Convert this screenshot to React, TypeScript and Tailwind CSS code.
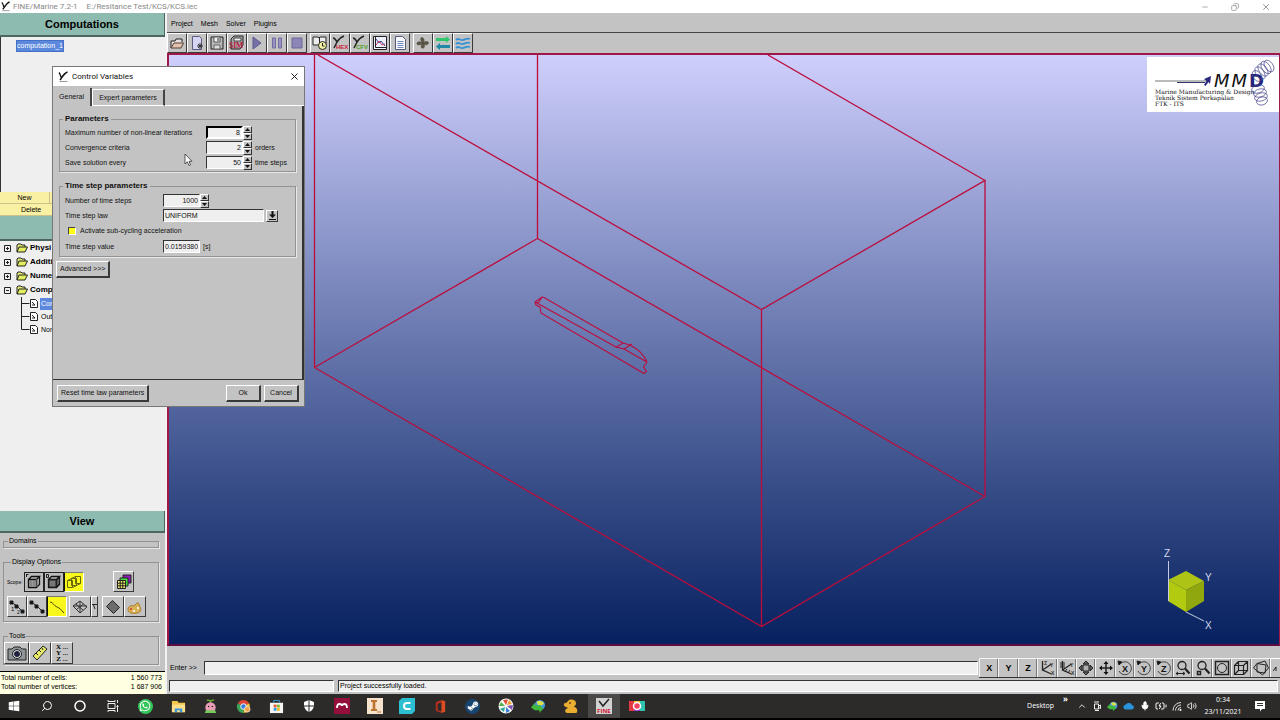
import React from "react";
import { FaWindows, FaWhatsapp, FaSteamSymbol } from "react-icons/fa";
import {
  Search, Circle, Minus, Copy, X, ChevronUp, ShieldHalf, Mic, BatteryCharging, Volume2,
} from "lucide-react";

const raised = "border border-t-white border-l-white border-r-[#3a3a3a] border-b-[#3a3a3a] bg-[#c3c3c3]";
const sunken = "border border-t-[#333] border-l-[#333] border-r-white border-b-white bg-[#efefef]";

type Kids = { children?: React.ReactNode };

function Icon({ size = "size-4", box = "0 0 16 16", children }: Kids & { size?: string; box?: string }) {
  return (
    <svg className={`${size} shrink-0`} viewBox={box} fill="none" stroke="#222" strokeWidth="1" aria-hidden="true">
      {children}
    </svg>
  );
}

function FineMark({ size = "size-3" }: { size?: string }) {
  return (
    <Icon size={size} box="0 0 12 12">
      <path d="M2 1.5c1 1 1.6 3 2.4 5.500M10.500 1C8 2 6 4.500 4.200 7.500L3 9" stroke="#111" strokeWidth="1.400" />
      <path d="M2.500 10.500h8" stroke="#999" />
    </Icon>
  );
}

function ToolButton({ label, width = "w-5", height = "h-5", tone = raised, children }: Kids & { label: string; width?: string; height?: string; tone?: string }) {
  return (
    <button type="button" aria-label={label} className={`${width} ${height} ${tone} flex shrink-0 items-center justify-center overflow-hidden`}>
      {children}
    </button>
  );
}

function PanelTitle({ children }: Kids) {
  return (
    <h2 className="flex shrink-0 items-center justify-center border-b-2 border-b-[#4d6660] border-r border-r-[#4d6660] bg-[#8ebbb0] text-[11px] font-bold leading-3 text-black">
      {children}
    </h2>
  );
}

const cubeFrame = (
  <path d="M2.500 5.500h8v8h-8zM2.500 5.500l3-3h8l-3 3M13.500 2.500v8l-3 3" stroke="#111" strokeWidth="1.300" />
);

/* ---------- main toolbar ---------- */

const toolbar: { label: string; icon: React.ReactNode }[][] = [
  [
    { label: "Open", icon: <Icon><path d="M2 13V6h4l1-2h6v3" fill="#e8e0dc" /><path d="M2 13l3-5h9.500l-2.500 5z" fill="#e3c3ad" stroke="#53403a" /></Icon> },
    { label: "New project", icon: <Icon><path d="M3.500 1.500h7l2 2v11h-9z" fill="#d6d6f4" stroke="#5c5c80" /><path d="M11 8v6M8 11h6M9 9l4 4M13 9l-4 4" stroke="#333" /></Icon> },
    { label: "Save", icon: <Icon><path d="M2 2h12v12H2z" fill="#b9b9b9" /><path d="M5 2h6v5H5z" fill="#f5f5f5" stroke="#555" /><path d="M5 10h6v4H5z" fill="#ddd" stroke="#666" /><path d="M9 3v3" /></Icon> },
    { label: "Save simulation", icon: <Icon><path d="M2 4l3-3h9v9l-3 4H2z" fill="#aaa" /><path d="M5 3h7v3H5z" fill="#eee" stroke="#444" /><text x="0" y="13" fontSize="7.500" fontWeight="700" fontFamily="Liberation Serif" fill="#b3123d" stroke="none">SIM</text></Icon> },
    { label: "Start", icon: <Icon><path d="M4 2v12l8-6z" fill="#7771a8" stroke="#5d588f" /></Icon> },
    { label: "Pause", icon: <Icon><path d="M3.500 3h3v10h-3zM9.500 3h3v10h-3z" fill="#9993c4" stroke="#716ba0" /></Icon> },
    { label: "Stop", icon: <Icon><path d="M3 3h10v10H3z" fill="#8c86b8" stroke="#6a6498" /></Icon> },
  ],
  [
    { label: "Task manager", icon: <Icon><path d="M1 2h5l1 1 1-1h6v8H1z" fill="#ececec" /><path d="M7.500 3v7" /><circle cx="10.500" cy="10.500" r="4" fill="#f2f0a0" /><path d="M10.500 8v3h2" /></Icon> },
    { label: "HEXPRESS", icon: <Icon><path d="M1 3c2 0 3 2 4 4 2-3 4-5 7-6M5 7l-3 6" strokeWidth="1.500" /><text x="4" y="13.500" fontSize="6" fontWeight="700" fontFamily="Liberation Sans" fill="#cc2038" stroke="none">HEX</text></Icon> },
    { label: "CFView", icon: <Icon><path d="M1 3c2 0 3 2 4 4 2-3 4-5 7-6M5 7l-3 6" strokeWidth="1.500" /><text x="4" y="13.500" fontSize="6" fontWeight="700" fontFamily="Liberation Sans" fill="#4ea01f" stroke="none">CFV</text></Icon> },
    { label: "Monitor", icon: <Icon><path d="M1.500 1.500h13v13h-13z" fill="#eeeefc" /><path d="M3.500 2v10.500H14" /><path d="M4 4l3 4 2-2 4 5" stroke="#3048a0" /><path d="M4 10l3-4 3 4 3-1" stroke="#c04060" /></Icon> },
    { label: "Report", icon: <Icon><path d="M3.500 1.500h7l3 3v10h-10z" fill="#f8f8ff" stroke="#555a78" /><path d="M5.500 6.500h6M5.500 8.500h6M5.500 10.500h6M5.500 12.500h6" stroke="#6e88b8" /></Icon> },
  ],
  [
    { label: "Propeller", icon: <Icon><path d="M8 8C4 5 6 1 8 3s1 3 0 5c3-3 7-1 5 1s-4 0-5-1c3 3 1 6-1 5s0-4 1-5c-3 3-7 2-6 0s4-1 6 0z" fill="#5d5848" stroke="#423f35" strokeWidth=".5" /></Icon> },
    { label: "Exchange", icon: <Icon><path d="M1 3h10V1l4 3.500L11 8V6H1z" fill="#2fc76b" stroke="none" /><path d="M15 10H5V8l-4 3.500L5 15v-2h10z" fill="#2189a8" stroke="none" /></Icon> },
    { label: "Waves", icon: <Icon><path d="M1 5c3-3 4 1 7 0s4-2 7-1M1 9c3-3 4 1 7 0s4-2 7-1M1 13c3-3 4 1 7 0s4-2 7-1" stroke="#3591d6" strokeWidth="1.800" /></Icon> },
  ],
];

function Toolbar() {
  return (
    <div className="flex h-[21px] items-center gap-[3px] border-t border-t-[#444] bg-[#c3c3c3]">
      {toolbar.map((group, i) => (
        <div key={i} className="flex">
          {group.map((t) => <ToolButton key={t.label} label={t.label}>{t.icon}</ToolButton>)}
        </div>
      ))}
    </div>
  );
}

/* ---------- left column ---------- */

const branches = ["Physi", "Additi", "Nume", "Comp"];
const leaves = ["Con", "Out", "Non"];

function Folder() {
  return (
    <Icon size="h-[10px] w-3" box="0 0 12 10">
      <path d="M1 9V2l1-1h3l1 1h3v2" fill="#e6ec7a" />
      <path d="M1 9l2-5h8.500L9 9z" fill="#e3ee5f" />
    </Icon>
  );
}

function Tree() {
  return (
    <ul className="flex-1 bg-[#efefef] pl-1 text-[8px] leading-3 text-black">
      {branches.map((name, i) => (
        <li key={name} className="whitespace-nowrap">
          <div className="flex h-[14px] items-center font-bold">
            <Icon size="size-[7px]" box="0 0 7 7"><path d={i === 3 ? "M.5.5h6v6h-6zM2 3.500h3" : "M.5.5h6v6h-6zM2 3.500h3M3.500 2v3"} /></Icon>
            <span className="ml-[5px] mr-[2px]"><Folder /></span>
            {name}
          </div>
          {i === 3 && (
            <ul className="ml-[17px] font-normal">
              {leaves.map((leaf, k) => (
                <li key={leaf} className="flex h-[13px] items-center text-[7px]">
                  <Icon size="h-[13px] w-[9px]" box="0 0 9 13"><path d={k === 2 ? "M.5 0v6.500h8" : "M.5 0v13M.5 6.500h8"} /></Icon>
                  <Icon size="h-[9px] w-2" box="0 0 8 9"><path d="M.5.5h5l2 2v6h-7z" fill="#fff" /><path d="M2 3l3 3M2 6h3" /></Icon>
                  <span className={k === 0 ? "ml-[2px] bg-[#5b87dd] px-px text-white" : "ml-[2px] px-px"}>{leaf}</span>
                </li>
              ))}
            </ul>
          )}
        </li>
      ))}
    </ul>
  );
}

const groupBox = "min-w-0 border border-[#929292] shadow-[1px_1px_0_#e8e8e8]";
const yellowTone = "border border-t-[#777] border-l-[#111] border-r-white border-b-white bg-[#f8f81c]";
const darkTone = "border border-[#222] bg-[#bdbdbd]";

function ViewPanel() {
  return (
    <div className="flex flex-col gap-[10px] bg-[#c3c3c3] pb-[6px] pl-[3px] pr-[6px] pt-1 text-[7px] leading-2 text-black">
      <fieldset className={`${groupBox} h-[11px]`}><legend className="ml-1 px-[1px]">Domains</legend></fieldset>
      <fieldset className={`${groupBox} pb-1 pl-[3px]`}>
        <legend className="ml-1 px-[1px]">Display Options</legend>
        <div className="flex items-center pt-[5px]">
          <span className="w-[17px] text-[5px]">Scope:</span>
          <ToolButton label="Solid scope" tone={darkTone}><Icon>{cubeFrame}<path d="M3 7h7M3 9h7M3 11h7M5 6v7M8 6v7M11 5v8" stroke="#777" /><path d="M0 .5h2.500M.5 0v3" /></Icon></ToolButton>
          <ToolButton label="Block scope" tone={darkTone}><Icon>{cubeFrame}<path d="M3 6h7v7H3z" fill="#777" /><path d="M11 6l2-2v6l-2 2z" fill="#999" /><path d="M.5.5h2v3h-2z" /></Icon></ToolButton>
          <ToolButton label="Face scope" tone={yellowTone}><Icon><path d="M1.500 6.500h5v7h-5zM5.500 4.500h5v7h-5zM9.500 2.500h5v7h-5zM1.500 6.500l8-4M6.500 13.500l8-4" stroke="#68680a" /></Icon></ToolButton>
          <div className="ml-[29px]">
            <ToolButton label="Layers" width="w-[21px]" height="h-[21px]"><Icon><path d="M7 1h8v8H7z" fill="#8d1db8" /><path d="M4 4h8v8H4z" fill="#46df3d" /><path d="M1.500 6.500h8v8h-8z" fill="#f0ef66" /><path d="M4.200 6.500v8M6.800 6.500v8M1.500 9.200h8M1.500 11.800h8" /></Icon></ToolButton>
          </div>
        </div>
        <div className="flex pt-1">
          <ToolButton label="Numbered points" height="h-[21px]"><Icon><path d="M2 3l6 4 6 6" /><path d="M1 2h3v3H1zM6 6h3v3H6zM12 11h3v3h-3z" fill="#111" /><text x="2" y="12" fontSize="6" fill="#111" stroke="none">1</text><text x="8" y="15" fontSize="5" fill="#111" stroke="none">2</text></Icon></ToolButton>
          <ToolButton label="Points" height="h-[21px]"><Icon><path d="M2 3l6 4 6 6" /><path d="M1 2h3v3H1zM6 6h3v3H6zM12 11h3v3h-3z" fill="#111" /></Icon></ToolButton>
          <ToolButton label="Curves" height="h-[21px]" tone={yellowTone}><Icon><path d="M1 3c3 0 4 4 7 5s4 3 7 6" stroke="#4b4b00" /></Icon></ToolButton>
          <div className="ml-[2px] flex">
            <ToolButton label="Wire grid" width="w-[22px]" height="h-[21px]"><Icon><path d="M1 7l7-5 7 6-7 6zM4 5l7 6M8 2v12M4.500 10.500l7-5.500M1 7h14" stroke="#333" /></Icon></ToolButton>
            <ToolButton label="Grid menu" width="w-[7px]" height="h-[21px]"><Icon size="size-[5px]" box="0 0 5 5"><path d="M0 .5h5M1.500 1l1.500 4" /></Icon></ToolButton>
          </div>
          <div className="ml-1 flex">
            <ToolButton label="Shading" width="w-[22px]" height="h-[21px]"><Icon><path d="M1.500 7.500l6-6 7 7-6 6z" fill="#6c6c6c" /></Icon></ToolButton>
            <ToolButton label="Colours" width="w-[22px]" height="h-[21px]"><Icon><path d="M1 10c0-3 4-4 6-3l3-3c3 0 2 2 3 4s2 5-3 6-9 0-9-4z" fill="#d9b157" stroke="#a87c2a" /><circle cx="4" cy="10" r="1" fill="#d33" stroke="none" /><circle cx="7" cy="12" r="1" fill="#fff" stroke="none" /><circle cx="11" cy="9" r="1" fill="#fff" stroke="none" /></Icon></ToolButton>
          </div>
        </div>
      </fieldset>
      <fieldset className={groupBox}>
        <legend className="ml-1 px-[1px]">Tools</legend>
        <div className="flex pt-[2px]">
          <ToolButton label="Snapshot" width="w-[25px]" height="h-[22px]"><Icon size="h-4 w-5" box="0 0 20 16"><path d="M1 4h4l2-2h6l2 2h4v11H1z" fill="#909698" /><circle cx="10" cy="9" r="4.500" fill="#cfd0df" /><circle cx="10" cy="9" r="2.500" fill="#20204c" /></Icon></ToolButton>
          <ToolButton label="Ruler" width="w-[22px]" height="h-[22px]"><Icon><path d="M1 11L11 1l4 3L5 15z" fill="#e6e96a" /><path d="M4 8l2 2M7 5l2 2M10 3l1 2" /></Icon></ToolButton>
          <ToolButton label="Coordinates" width="w-[22px]" height="h-[22px]">
            <span className="flex flex-col font-['Liberation_Serif',serif] text-[7px] font-bold leading-[6px]"><span>X ...</span><span>Y ...</span><span>Z ...</span></span>
          </ToolButton>
        </div>
      </fieldset>
    </div>
  );
}

function Sidebar() {
  const yellow = "border-b border-r border-[#c9c28a] bg-[#faf0a4] text-[7px] leading-[10px] text-black";
  return (
    <aside className="flex w-[165px] shrink-0 flex-col">
      <div className="grid h-6"><PanelTitle>Computations</PanelTitle></div>
      <div className="flex h-[155px] items-start border-l border-l-[#333] bg-[#efefef] pl-[15px] pt-[3px]">
        <span className="border border-[#4470c8] bg-[#5b87dd] text-[7px] leading-[10px] text-white">computation_1</span>
      </div>
      <div className="flex h-3"><button type="button" className={`w-[50px] ${yellow}`}>New</button><button type="button" aria-label="Rename" className={`flex-1 ${yellow}`} /></div>
      <div className="flex h-3"><button type="button" className={`w-[63px] ${yellow}`}>Delete</button><button type="button" aria-label="Copy" className={`flex-1 ${yellow}`} /></div>
      <div className="grid h-[25px]"><PanelTitle /></div>
      <Tree />
      <div className="grid h-[22px]"><PanelTitle>View</PanelTitle></div>
      <ViewPanel />
      <dl className="h-[23px] border-t border-t-black bg-[#ffffe1] px-[1px] pt-px text-[7px] leading-[9px] text-black">
        <div className="flex justify-between pr-[2px]"><dt>Total number of cells:</dt><dd>1 560 773</dd></div>
        <div className="flex justify-between pr-[2px]"><dt>Total number of vertices:</dt><dd>1 687 906</dd></div>
      </dl>
    </aside>
  );
}

/* ---------- 3D view ---------- */

function Scene() {
  return (
    <div className="relative flex-1 border-2 border-r border-[#a01848] border-b-[#5d0d40] bg-linear-to-b from-[#cfcffc] to-[#07205f]">
      <svg className="absolute inset-0 size-full" viewBox="169 55 1110 590" preserveAspectRatio="xMinYMin slice" fill="none" stroke="#bd0c3c" strokeWidth="1.300" role="img" aria-label="Hull inside its flow domain">
        <path d="M314.500 55V367.500L761.500 626.500 985 496.500V180.500L761.500 309.500 318 55M761.500 309.500V626.500M537.500 55V238.500L314.500 367.500M537.500 238.500L985 496.500M768 55L985 180.500" />
        <path strokeWidth="1.100" d="M616 347L537 303M623 343L544 297.500l-2-.5-7 5 1 3 4 2 1 6L644 373.500l2.500-2-3-4.500 3.500-5c-3-7-9-13-17-17l-7-2-7 4 8 2 22 12.500M624 349l8-5M542 297l-3 5-4 1" />
        <g stroke="none">
          <path d="M1168 580l18-9 18 10-18 9z" fill="#adc416" />
          <path d="M1168 580l18 10v22l-18-11z" fill="#b2cb10" />
          <path d="M1186 590l18-9v20l-18 11z" fill="#91a70e" />
        </g>
        <path d="M1168.500 561v40M1186 612l18 9" stroke="#c5cbe0" strokeWidth="1" />
        <g stroke="none" fill="#d3d8ea" fontFamily="Liberation Sans, sans-serif" fontSize="10">
          <text x="1164" y="557">Z</text><text x="1205" y="581">Y</text><text x="1205" y="629">X</text>
        </g>
      </svg>
      <div className="absolute right-0 top-[2px] h-[55px] w-[132px] bg-white pl-2 pt-4 text-[#111]">
        <div className="flex h-4 items-center">
          <Icon size="h-3 w-[57px]" box="0 0 57 12">
            <path d="M0 6h52" stroke="#777" /><path d="M22 7.500h28" stroke="#333a70" />
            <path d="M49 4l7-3-1 8-1.500-2-3 4-1.500-1 2.500-4z" fill="#2b2880" stroke="none" />
          </Icon>
          <span className="ml-[2px] flex gap-[2px] font-['DejaVu_Sans',sans-serif] text-[18px] leading-4">
            <i>M</i><i>M</i><b className="text-[#24227c]">D</b>
          </span>
        </div>
        <p className="font-['DejaVu_Serif',serif] text-[6px] leading-[6px] whitespace-nowrap">
          Marine Manufacturing &amp; Design<br />Teknik Sistem Perkapalan<br />FTK - ITS
        </p>
        <svg className="absolute right-1 top-[2px] h-12 w-6" viewBox="0 0 24 48" fill="none" stroke="#4a4a90" strokeWidth=".7" aria-hidden="true">
          <ellipse cx="18" cy="7" rx="4" ry="6.500" transform="rotate(-35 18 7)" /><ellipse cx="15" cy="8.500" rx="4" ry="7" transform="rotate(-35 15 8.500)" />
          <ellipse cx="12" cy="11" rx="4" ry="7" transform="rotate(-35 12 11)" /><ellipse cx="9" cy="14" rx="4" ry="7" transform="rotate(-35 9 14)" />
          <ellipse cx="6" cy="17" rx="4" ry="6" transform="rotate(-35 6 17)" />
          <ellipse cx="7" cy="30" rx="6.500" ry="4" transform="rotate(-15 7 30)" /><ellipse cx="9" cy="34" rx="6.500" ry="4" transform="rotate(-15 9 34)" />
          <ellipse cx="10" cy="38" rx="6.500" ry="4" transform="rotate(-15 10 38)" /><ellipse cx="11" cy="42" rx="5.500" ry="4" transform="rotate(-15 11 42)" />
        </svg>
      </div>
    </div>
  );
}

/* ---------- command bar ---------- */

function RotateIcon({ axis }: { axis: string }) {
  return (
    <Icon>
      <path d="M3 4a6.500 6.500 0 1 1-1 7" stroke="#444" /><path d="M1 1l4 1-3 3z" fill="#111" />
      <text x="5" y="11.500" fontSize="9" fontWeight="700" fontFamily="Liberation Sans" fill="#111" stroke="none">{axis}</text>
    </Icon>
  );
}

const axisArms = <path d="M3.500 1v9l9 4M3.500 10l9-6" strokeWidth="1.300" />;
const lens = <><circle cx="7" cy="5.500" r="4" strokeWidth="1.300" /><path d="M10 8.500l4.500 5" strokeWidth="2.200" /></>;

const viewTools: { label: string; icon: React.ReactNode }[] = [
  { label: "View along X", icon: "X" },
  { label: "View along Y", icon: "Y" },
  { label: "View along Z", icon: "Z" },
  { label: "Isometric view", icon: <Icon>{axisArms}<text x="5" y="5" fontSize="5" fill="#333" stroke="none">Z</text><text x="11" y="7" fontSize="5" fill="#333" stroke="none">Y</text><text x="12" y="15" fontSize="5" fill="#333" stroke="none">X</text></Icon> },
  { label: "Oblique view", icon: <Icon>{axisArms}<path d="M1 3h5M1 5h5M1 7h5M6 12l2-3M9 13l2-3" /><text x="11" y="7" fontSize="5" fill="#333" stroke="none">Y</text><text x="12" y="15" fontSize="5" fill="#333" stroke="none">X</text></Icon> },
  { label: "Fit", icon: <Icon><path d="M5 5h6v6H5z" fill="#b0b0b0" /><path d="M8 1l3 3H5zM8 15l3-3H5zM1 8l3-3v6zM15 8l-3-3v6z" fill="#666" /></Icon> },
  { label: "Pan", icon: <Icon><path d="M8 2v12M2 8h12" strokeWidth="1.500" /><path d="M8 1l2.500 3h-5zM8 15l2.500-3h-5zM1 8l3-2.500v5zM15 8l-3-2.500v5z" fill="#111" stroke="none" /></Icon> },
  { label: "Rotate about X", icon: <RotateIcon axis="X" /> },
  { label: "Rotate about Y", icon: <RotateIcon axis="Y" /> },
  { label: "Rotate about Z", icon: <RotateIcon axis="Z" /> },
  { label: "Zoom", icon: <Icon>{lens}<path d="M1 13.500h9M3 12l-2 1.500L3 15M8 12l2 1.500L8 15" /></Icon> },
  { label: "Zoom region", icon: <Icon>{lens}<path d="M2.500 11.500h3v3h-3z" strokeWidth="1.500" /></Icon> },
  { label: "Original view", icon: <Icon><path d="M1.500 1.500h13v13h-13z" strokeWidth="1.500" /><circle cx="8" cy="8" r="4.500" /></Icon> },
  { label: "Perspective", icon: <Icon><path d="M1.500 5.500h9v9h-9zM5.500 1.500h9v9h-9zM1.500 5.500l4-4M10.500 5.500l4-4M10.500 14.500l4-4M1.500 14.500l4-4" strokeWidth="1.200" /></Icon> },
  { label: "Cut plane", icon: <Icon><path d="M4 3.500L12 1l3.500 7-6 7L.5 8zM4 3.500l9 1.500-1 8-8-1z" /></Icon> },
];

function CommandBar() {
  return (
    <div className="bg-[#c3c3c3] pt-3 text-[7px] leading-2 text-black">
      <div className="flex h-5 items-center">
        <label htmlFor="command" className="w-[37px] shrink-0 pl-[3px]">Enter &gt;&gt;</label>
        <input id="command" className={`${sunken} h-[14px] min-w-0 flex-1`} />
        <div className="ml-px flex w-[301px] border-b border-b-[#333]">
          <div className="grid w-[291px] grid-cols-15">
            {viewTools.map((t) => (
              <button key={t.label} type="button" aria-label={t.label} className="flex h-[19px] items-center justify-center border-l border-t border-[#f4f4f4] bg-[#c3c3c3] text-[9px] font-bold shadow-[inset_-1px_0_0_#777]">
                {t.icon}
              </button>
            ))}
          </div>
          <button type="button" aria-label="More views" className="flex flex-1 items-center justify-center border-l border-t border-white">
            <Icon size="size-[5px]" box="0 0 5 5"><path d="M0 5l3-4v4" /></Icon>
          </button>
        </div>
      </div>
      <div className="flex gap-1 px-[2px] py-[2px]">
        <div className={`${sunken} h-3 w-[165px]`} />
        <div className={`${sunken} h-3 flex-1 pl-[1px] pt-[1px]`}>Project successfully loaded.</div>
      </div>
    </div>
  );
}

/* ---------- dialog ---------- */

function Stepper({ name }: { name: string }) {
  const cell = "flex h-[7px] w-[9px] items-center justify-center border border-t-white border-l-white border-r-[#333] border-b-[#333] bg-[#c3c3c3]";
  return (
    <span className="flex flex-col">
      <button type="button" aria-label={`Increase ${name}`} className={cell}><Icon size="h-[3px] w-[5px]" box="0 0 5 3"><path d="M0 3L2.500 0 5 3z" fill="#111" stroke="none" /></Icon></button>
      <button type="button" aria-label={`Decrease ${name}`} className={cell}><Icon size="h-[3px] w-[5px]" box="0 0 5 3"><path d="M0 0L2.500 3 5 0z" fill="#111" stroke="none" /></Icon></button>
    </span>
  );
}

function Field({ id, label, value, unit, wide, step = true, strong }: { id: string; label: string; value: string; unit?: string; wide?: boolean; step?: boolean; strong?: boolean }) {
  return (
    <div className="flex h-[15px] items-center">
      <label htmlFor={id} className={wide ? "w-[141px] whitespace-nowrap" : "w-[98px]"}>{label}</label>
      <input id={id} defaultValue={value} className={`${sunken} h-[13px] w-[37px] px-[1px] ${step ? "text-right" : ""} ${strong ? "border-2 border-t-black border-l-black" : ""}`} />
      {step && <Stepper name={label} />}
      {unit && <span className="ml-[3px] whitespace-nowrap">{unit}</span>}
    </div>
  );
}

function ControlDialog() {
  const box = "mx-[6px] min-w-0 border border-[#929292] pl-[5px] shadow-[1px_1px_0_#e8e8e8]";
  const action = `${raised} h-[17px] border-r-2 border-b-2`;
  return (
    <section role="dialog" aria-labelledby="dialog-title" className="absolute left-[52px] top-[66px] flex w-[253px] flex-col border border-[#777] bg-[#c3c3c3] text-[7px] leading-2 text-[#111]">
      <header className="flex h-[19px] items-center bg-white px-1">
        <FineMark />
        <h1 id="dialog-title" className="ml-[3px] flex-1 font-['Roboto',sans-serif] text-[8px] leading-3">Control Variables</h1>
        <button type="button" aria-label="Close"><X className="size-[11px]" strokeWidth={2} /></button>
      </header>
      <div role="tablist" className="flex h-5 items-end">
        <button type="button" role="tab" aria-selected="true" className="h-[18px] w-[39px] border-r-2 border-r-[#444] pb-px">General</button>
        <button type="button" role="tab" aria-selected="false" className="h-[17px] w-[73px] border-b border-b-white border-l border-l-white border-r-2 border-r-[#444] border-t border-t-white">Expert parameters</button>
        <span className="flex-1 border-b border-b-white" />
      </div>
      <div className="flex h-[274px] flex-col border-b border-r-2 border-[#333] pt-[7px]">
        <fieldset className={`${box} pb-px`}>
          <legend className="ml-[-2px] px-[2px] text-[8px] font-bold leading-3">Parameters</legend>
          <Field id="iterations" label="Maximum number of non-linear iterations" value="8" wide strong />
          <Field id="criteria" label="Convergence criteria" value="2" unit="orders" wide />
          <Field id="save" label="Save solution every" value="50" unit="time steps" wide />
        </fieldset>
        <fieldset className={`${box} mt-2 pb-[2px] pt-px`}>
          <legend className="ml-[-2px] px-[2px] text-[8px] font-bold leading-3">Time step parameters</legend>
          <Field id="steps" label="Number of time steps" value="1000" />
          <div className="flex h-[15px] items-center">
            <label htmlFor="law" className="w-[98px]">Time step law</label>
            <select id="law" className={`${sunken} h-[13px] w-[101px] appearance-none pl-[1px]`}><option>UNIFORM</option></select>
            <button type="button" aria-label="Choose time step law" className={`${raised} ml-[2px] flex size-3 items-center justify-center`}>
              <Icon size="size-[9px]" box="0 0 9 9"><path d="M3.500 0h2v3.500H8l-3.500 3.500L1 3.500h2.500zM1 8h7v1H1z" fill="#111" stroke="none" /></Icon>
            </button>
          </div>
          <div className="flex h-4 items-center">
            <input id="cycling" type="checkbox" className="ml-[3px] size-2 appearance-none border border-b-white border-l-[#444] border-r-white border-t-[#444] bg-[#ffff10]" />
            <label htmlFor="cycling" className="ml-1">Activate sub-cycling acceleration</label>
          </div>
          <Field id="value" label="Time step value" value="0.0159380" unit="[s]" step={false} />
        </fieldset>
        <div className="pl-[3px] pt-1"><button type="button" className={`${action} px-[3px]`}>Advanced &gt;&gt;&gt;</button></div>
      </div>
      <footer className="flex h-[26px] items-center gap-[3px] pl-1 pr-[5px]">
        <button type="button" className={`${action} mr-auto px-[3px]`}>Reset time law parameters</button>
        <button type="button" className={`${action} w-[35px]`}>Ok</button>
        <button type="button" className={`${action} w-[35px]`}>Cancel</button>
      </footer>
    </section>
  );
}

/* ---------- taskbar ---------- */

function Globe({ size = "size-[15px]" }: { size?: string }) {
  return (
    <Icon size={size}>
      <circle cx="9.500" cy="6.500" r="5.500" fill="#4a98dc" stroke="none" />
      <path d="M6 3c3-2 6-1 8 2l-3 2-4-1z" fill="#d9e04a" stroke="none" />
      <path d="M0 9l4-5v3h6l3 3-4 5v-3H4z" fill="#3fb939" stroke="none" />
    </Icon>
  );
}

const apps: { label: string; icon: React.ReactNode }[] = [
  { label: "Start menu", icon: <FaWindows className="size-3 text-white" /> },
  { label: "Search", icon: <Search className="size-3 -scale-x-100 text-white" /> },
  { label: "Cortana", icon: <Circle className="size-3 text-white" strokeWidth={3} /> },
  { label: "Task view", icon: <Icon size="size-3" box="0 0 12 12"><path d="M1 3.500h7v5H1zM1 0v1.500h7V0M1 12v-1.500h7V12M10.500 0v3M10.500 5v7M9.500 6.500h2" stroke="#eee" /></Icon> },
  { label: "WhatsApp", icon: <span className="flex size-[15px] items-center justify-center rounded-full bg-[#35c65a]"><FaWhatsapp className="size-3 text-white" /></span> },
  { label: "File Explorer", icon: <Icon size="size-[15px]"><path d="M1 2h6l1 2h7v10H1z" fill="#f3c84b" stroke="none" /><path d="M1 6h14v8H1z" fill="#ffe08a" stroke="none" /><path d="M4 14v-4h8v4h-2.500v-2h-3v2z" fill="#3a94dc" stroke="none" /></Icon> },
  { label: "Pet", icon: <Icon size="size-[15px]"><path d="M8 4V1M4 1.500c2-1 3 0 4 1 1-1 2-2 4-1" stroke="#69b432" strokeWidth="1.500" /><circle cx="8" cy="9" r="5.500" fill="#ec9db6" stroke="none" /><circle cx="6" cy="8" r=".8" fill="#222" stroke="none" /><circle cx="10" cy="8" r=".8" fill="#222" stroke="none" /><path d="M3 12h10l1 3H2z" fill="#79c85b" stroke="none" /></Icon> },
  { label: "Chrome", icon: <Icon size="size-[15px]"><path d="M8 8L1.900 4.500A7 7 0 0 1 14.100 4.500z" fill="#e04434" stroke="none" /><path d="M8 8h6.900A7 7 0 0 1 8 15z" fill="#f3c52e" stroke="none" /><path d="M8 8L14.100 4.500 15 8z" fill="#f3c52e" stroke="none" /><path d="M8 8v7A7 7 0 0 1 1.900 4.500z" fill="#3ba457" stroke="none" /><circle cx="8" cy="8" r="3" fill="#3a7de0" stroke="#fff" /><circle cx="12" cy="11" r="3" fill="#f0a24a" stroke="#fff" strokeWidth=".7" /></Icon> },
  { label: "Store", icon: <Icon size="size-[15px]"><path d="M1 4h14v11H1z" fill="#f4f4f4" stroke="none" /><path d="M5 4V1.500h6V4" stroke="#36a4dc" /><path d="M5 6h3v3H5z" fill="#e8512c" stroke="none" /><path d="M8.500 6h3v3h-3z" fill="#7fb82d" stroke="none" /><path d="M5 9.500h3v3H5z" fill="#2b9be0" stroke="none" /><path d="M8.500 9.500h3v3h-3z" fill="#f8b820" stroke="none" /></Icon> },
  { label: "Security", icon: <Icon size="size-3" box="0 0 12 12"><path d="M6 0l5 2v3c0 3-2 6-5 7-3-1-5-4-5-7V2z" fill="#fff" stroke="none" /><path d="M6 0v12M1 6h10" stroke="#2c2b2a" /></Icon> },
  { label: "Mendeley", icon: <Icon size="size-4"><path d="M0 0h16v16H0z" fill="#950f3c" stroke="none" /><path d="M3 10c0-2 1-4 2.500-4S8 7 8 8c0-1 1-2 2.500-2S13 8 13 10" stroke="#fff" strokeWidth="1.800" /></Icon> },
  { label: "Inventor", icon: <Icon size="size-4"><path d="M0 0h16v16H0z" fill="#f7e2cd" stroke="none" /><path d="M4 2h6v2H8.300v7H10v2H4v-2h1.700V4H4z" fill="#bd7430" stroke="none" /><path d="M10 14h4" stroke="#bd7430" /></Icon> },
  { label: "Cura", icon: <Icon size="size-4"><path d="M3 0h13v13l-3 3H0V3z" fill="#2cbfd2" stroke="none" /><path d="M11.500 5H8a3 3 0 0 0 0 6h3.500" stroke="#fff" strokeWidth="2" /></Icon> },
  { label: "Office", icon: <Icon size="size-[15px]"><path d="M9 1L3 3.500v9L9 15v-2l-4-1V5l4-1z" fill="#b82f1c" stroke="none" /><path d="M9 1l4 1.500v11L9 15z" fill="#dd4c22" stroke="none" /></Icon> },
  { label: "Steam", icon: <span className="flex size-[15px] items-center justify-center rounded-full bg-[#17456f]"><FaSteamSymbol className="size-3 text-white" /></span> },
  { label: "Photos", icon: <Icon size="size-4"><circle cx="8" cy="8" r="7.500" fill="#f6f6f6" stroke="none" /><g stroke="none"><path d="M8 7L5 2l5-.5z" fill="#e24a33" /><path d="M9 7l2-5 3 4z" fill="#f39a27" /><path d="M9 8l6-1-1 5z" fill="#7a52b3" /><path d="M8 9l4 4-4 2z" fill="#367fd3" /><path d="M7 9l-1 5-4-3z" fill="#2ea997" /><path d="M7 8L1 8l2-4z" fill="#53ae45" /></g></Icon> },
  { label: "Download Manager", icon: <Globe /> },
  { label: "Duck", icon: <Icon size="size-4"><path d="M5 3c3-3 8-1 8 2s-2 3-2 4c4 0 4 6 2 6H4c-3-1-2-4 1-5C3 9 0 8 1 6s2 0 4-3z" fill="#e9ad31" stroke="none" /><circle cx="7" cy="5" r="1" fill="#6a4412" stroke="none" /></Icon> },
  { label: "FINE", icon: <span className="flex h-4 w-4 flex-col items-center bg-[#d2d2d2]"><Icon size="h-[10px] w-3" box="0 0 12 10"><path d="M1 3l4 5 6-7" strokeWidth="1.500" /></Icon><span className="text-[6px] font-bold leading-[6px] text-[#d21434]">FINE</span></span> },
  { label: "Recorder", icon: <Icon size="size-4"><path d="M0 3h5v10H0z" fill="#e33a42" stroke="none" /><path d="M5 3h6v5H5z" fill="#efc52b" stroke="none" /><path d="M5 8h6v5H5z" fill="#8a3ad3" stroke="none" /><path d="M11 3h5v10h-5z" fill="#2fc3b0" stroke="none" /><circle cx="8" cy="8" r="3.500" fill="#f3455f" stroke="#fff" strokeWidth="1.500" /></Icon> },
];

function Taskbar() {
  const tray = "size-[10px] text-white";
  return (
    <footer className="flex h-[26px] shrink-0 items-center justify-between border-b-2 border-b-black bg-[#2c2b2a] font-['Open_Sans',sans-serif] text-[8px] leading-3 text-white">
      <nav aria-label="Applications" className="-ml-[2px] grid h-full w-[655px] grid-cols-20">
        {apps.map((a) => (
          <button key={a.label} type="button" aria-label={a.label} className={`flex items-center justify-center ${a.label === "FINE" ? "bg-[#4a4948]" : ""}`}>{a.icon}</button>
        ))}
      </nav>
      <div className="flex h-full items-center gap-[5px] pr-[14px]">
        <span className="mr-1 text-[7px]">Desktop</span>
        <span className="self-start font-bold leading-[10px]">»</span>
        <ChevronUp className={`${tray} ml-1`} />
        <Icon size="size-[10px]" box="0 0 10 10"><path d="M2.500 3h4v5h-4zM6.500 5l2-1v3.500l-2-1M2 1h5M3 9.500h4" stroke="#eee" /></Icon>
        <Globe size="size-[11px]" />
        <Icon size="h-[10px] w-3" box="0 0 12 10"><path d="M3 8.500a2.500 2.500 0 0 1 0-5A3.500 3.500 0 0 1 9 4a2.300 2.300 0 0 1 0 4.500z" fill="#2a93de" stroke="none" /></Icon>
        <Mic className={`${tray} fill-white`} />
        <BatteryCharging className="size-3 text-white" />
        <Icon size="size-[10px]" box="0 0 10 10"><path d="M1 9.500a8 8 0 0 1 8-8M3.500 9.500A5.500 5.500 0 0 1 9 4M6 9.500a3 3 0 0 1 3-3" stroke="#ddd" /><circle cx="8.500" cy="9" r="1" fill="#fff" stroke="none" /></Icon>
        <Volume2 className={tray} />
        <div className="ml-px flex w-10 flex-col items-center text-[7px]"><span>0:34</span><span>23/11/2021</span></div>
        <Icon size="ml-[6px] size-3" box="0 0 12 12"><path d="M1 1h10v8H8l-2 2.500V9H1z" fill="#fff" stroke="none" /><path d="M3 3.500h6M3 5.500h6" stroke="#333" /></Icon>
      </div>
    </footer>
  );
}

export default function App() {
  return (
    <div className="relative flex min-h-screen flex-col bg-[#f2f2f2] font-['Liberation_Sans',sans-serif]">
      <header className="flex h-[13px] shrink-0 items-center bg-white pr-[9px] font-['Roboto',sans-serif] text-[8px] leading-3 text-[#888]">
        <FineMark size="size-[11px]" />
        <span className="ml-[2px]">FINE/Marine 7.2-1</span>
        <span className="ml-[9px] flex-1">E:/Resitance Test/KCS/KCS.iec</span>
        <div className="flex items-center gap-[22px]">
          <button type="button" aria-label="Minimize"><Minus className="size-2" /></button>
          <button type="button" aria-label="Restore"><Copy className="size-2 -scale-x-100" /></button>
          <button type="button" aria-label="Close window"><X className="size-[10px]" /></button>
        </div>
      </header>
      <div className="flex flex-1">
        <Sidebar />
        <main className="ml-[2px] flex min-w-0 flex-1 flex-col">
          <nav aria-label="Menu" className="flex h-[19px] items-center gap-2 bg-[#c3c3c3] pl-1 pt-[2px] text-[7px] leading-2 text-black">
            {["Project", "Mesh", "Solver", "Plugins"].map((m) => <button key={m} type="button">{m}</button>)}
          </nav>
          <Toolbar />
          <Scene />
          <CommandBar />
        </main>
      </div>
      <Taskbar />
      <ControlDialog />
      <svg className="absolute left-[184px] top-[153px] h-[14px] w-[9px]" viewBox="0 0 9 14" fill="#fff" stroke="#333" strokeWidth=".8" aria-hidden="true">
        <path d="M1 1v10l2.300-2.200L5 12.500l1.500-.7L5 8.300h3z" />
      </svg>
    </div>
  );
}
